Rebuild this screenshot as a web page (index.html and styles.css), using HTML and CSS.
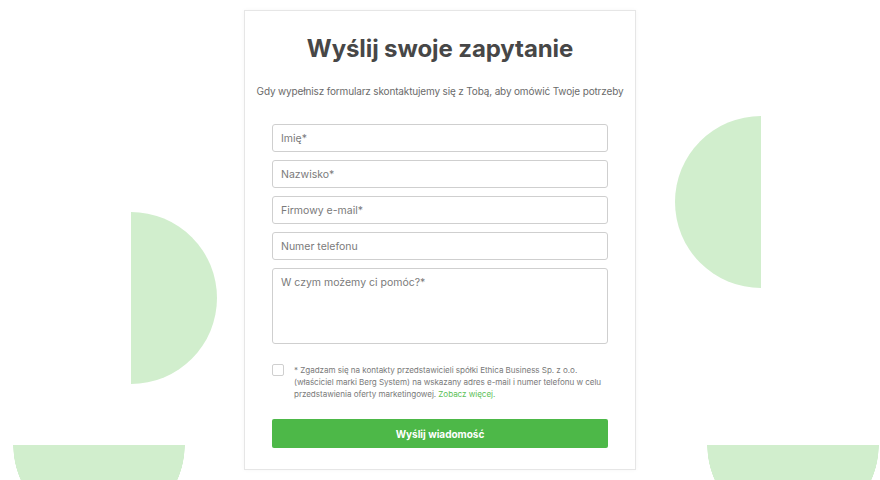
FILE: index.html
```html
<!DOCTYPE html>
<html lang="pl">
<head>
<meta charset="utf-8">
<title>Wyślij swoje zapytanie</title>
<link rel="stylesheet" href="styles.css">
</head>
<body>
<div class="decor decor-left"></div>
<div class="decor-bottom decor-left-bottom"></div>
<div class="decor decor-right"></div>
<div class="decor-bottom decor-right-bottom"></div>
<main class="page">
  <form class="card">
    <h1 class="title">Wyślij swoje zapytanie</h1>
    <p class="subtitle">Gdy wypełnisz formularz skontaktujemy się z Tobą, aby omówić Twoje potrzeby</p>
    <div class="fields">
      <input class="field" type="text" placeholder="Imię*">
      <input class="field" type="text" placeholder="Nazwisko*">
      <input class="field" type="email" placeholder="Firmowy e-mail*">
      <input class="field" type="tel" placeholder="Numer telefonu">
      <textarea class="field area" placeholder="W czym możemy ci pomóc?*"></textarea>
    </div>
    <label class="consent">
      <span class="box"></span>
      <span class="consent-text">* Zgadzam się na kontakty przedstawicieli spółki Ethica Business Sp. z o.o. (właściciel marki Berg System) na wskazany adres e-mail i numer telefonu w celu przedstawienia oferty marketingowej. <a class="more" href="#">Zobacz więcej.</a></span>
    </label>
    <button class="submit" type="button">Wyślij wiadomość</button>
  </form>
</main>
</body>
</html>
```

FILE: styles.css
```css
html, body {
  margin: 0;
  padding: 0;
  background: #ffffff;
  font-family: Inter, "Noto Sans", "Liberation Sans", sans-serif;
  width: 880px;
  height: 480px;
  overflow: hidden;
  position: relative;
}

.decor {
  position: absolute;
  background: #d1eecd;
  width: 172px;
  height: 172px;
  border-radius: 50%;
}
.decor-left {
  left: 45px;
  top: 212px;
  clip-path: inset(0 0 0 50%);
}
.decor-right {
  left: 675px;
  top: 116px;
  clip-path: inset(0 50% 0 0);
}
.decor-bottom {
  position: absolute;
  top: 445px;
  width: 172px;
  height: 35px;
  background: radial-gradient(circle 86px at 86px 0, #d1eecd 85.5px, rgba(209, 238, 205, 0) 86px);
}
.decor-left-bottom {
  left: 13px;
}
.decor-right-bottom {
  left: 707px;
}

.page {
  position: relative;
  display: flex;
  justify-content: center;
  padding-top: 10px;
}

.card {
  width: 336px;
  background: #ffffff;
  border: 1px solid #e6e6e6;
  box-shadow: 0 0 4px rgba(0, 0, 0, 0.04);
  padding: 23px 27px 21px;
  display: flex;
  flex-direction: column;
}

.title {
  margin: 0;
  font-size: 24px;
  line-height: 30px;
  font-weight: 700;
  color: #474747;
  text-align: center;
  letter-spacing: -0.1px;
}

.subtitle {
  margin: 20px -20px 0;
  font-size: 10px;
  line-height: 14px;
  color: #6b6b6b;
  text-align: center;
  white-space: nowrap;
  letter-spacing: -0.15px;
}

.fields {
  margin-top: 26px;
  display: flex;
  flex-direction: column;
  gap: 8px;
}

.field {
  box-sizing: border-box;
  width: 100%;
  height: 28px;
  margin: 0;
  padding: 0 8px;
  border: 1px solid #cfcfcf;
  border-radius: 3px;
  font-family: inherit;
  font-size: 10.5px;
  color: #444;
  background: #fff;
  outline: none;
}
.field::placeholder {
  color: #7a7a7a;
  opacity: 1;
}
.area {
  height: 76px;
  padding: 7px 8px;
  resize: none;
  line-height: 14px;
  display: block;
}

.consent {
  margin-top: 20px;
  display: flex;
  gap: 10px;
  align-items: flex-start;
}
.box {
  flex: none;
  width: 10px;
  height: 10px;
  border: 1px solid #cfcfcf;
  border-radius: 2px;
}
.consent-text {
  font-size: 8.1px;
  line-height: 12px;
  color: #7a7a7a;
  letter-spacing: -0.05px;
}
.more {
  color: #5dbf58;
  text-decoration: none;
}

.submit {
  margin-top: 19px;
  height: 29px;
  border: none;
  border-radius: 2px;
  background: #4db848;
  color: #ffffff;
  font-family: inherit;
  font-size: 10px;
  font-weight: 700;
  cursor: pointer;
}
```
